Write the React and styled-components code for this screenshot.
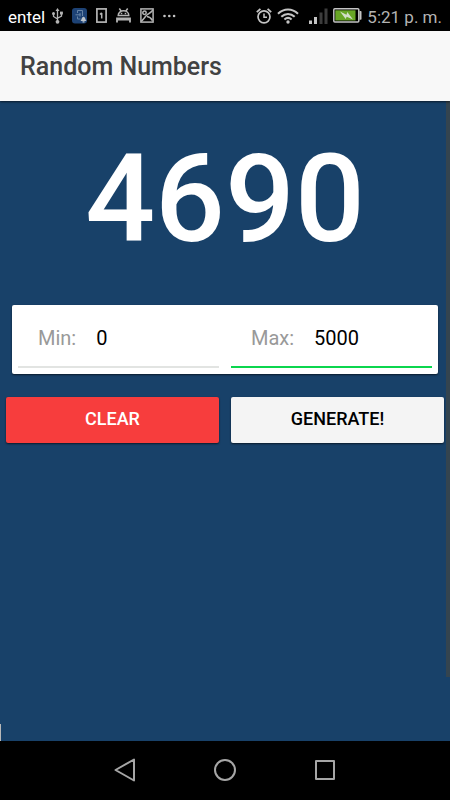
import React, { Component } from "react";
import styled, { createGlobalStyle } from "styled-components";

const GlobalStyle = createGlobalStyle`
  * {
    box-sizing: border-box;
  }

  body {
    margin: 0;
    background: #184169;
    font-family: Roboto, "Liberation Sans", sans-serif;
  }
`;

const Screen = styled.div`
  min-height: 100vh;
  display: flex;
  flex-direction: column;
  background: #184169;
`;

const StatusBar = styled.div`
  height: 31px;
  padding: 0 8px;
  display: flex;
  justify-content: space-between;
  align-items: center;
  background: #000;
  color: #c4c4c4;
`;

const StatusGroup = styled.div`
  display: flex;
  align-items: center;
  gap: ${props => props.$gap}px;

  svg {
    display: block;
    flex: none;
  }
`;

const StatusText = styled.span`
  padding-top: 2px;
  font-size: 17px;
  line-height: 24px;
  color: ${props => (props.$bright ? "#fff" : "#b4b4b4")};
`;

const Header = styled.header`
  height: 70px;
  padding: 2px 20px 0;
  display: flex;
  align-items: center;
  background: #f8f8f8;
  box-shadow: 0 1px 2px rgba(0, 0, 0, 0.6);
  z-index: 1;

  h1 {
    margin: 0;
    font-size: 25px;
    line-height: 32px;
    font-weight: 500;
    color: #424242;
  }
`;

const Content = styled.main`
  position: relative;
  flex: 1;
  padding: 26px 6px;
`;

const ScrollThumb = styled.div`
  position: absolute;
  top: 0;
  right: 0;
  width: 4px;
  height: 90%;
  background: #34444f;
`;

const Caret = styled.div`
  position: absolute;
  bottom: 0;
  left: 0;
  width: 1px;
  height: 17px;
  background: #b8b8b8;
`;

const Result = styled.output`
  display: block;
  font-size: 123px;
  line-height: 144px;
  font-weight: 500;
  text-align: center;
  color: #fff;
`;

const Card = styled.div`
  margin: 34px 6px 23px;
  padding: 6px 0;
  display: grid;
  grid-template-columns: repeat(2, minmax(0, 1fr));
  border-radius: 2px;
  background: #fff;
  box-shadow: 0 1px 2px rgba(0, 0, 0, 0.6);
`;

const Field = styled.label`
  height: 57px;
  margin: 0 6px;
  padding: 0 0 2px 20px;
  display: flex;
  align-items: center;
  gap: 20px;
  border-bottom: 2px solid ${props => (props.$active ? "#0bd64e" : "#e2e4e2")};
  font-size: 20px;
  line-height: 24px;
  color: #999;

  input {
    flex: 1;
    min-width: 0;
    padding: 0;
    border: none;
    outline: none;
    background: transparent;
    font: inherit;
    color: #000;
  }
`;

const Buttons = styled.div`
  display: grid;
  grid-template-columns: repeat(2, minmax(0, 1fr));
  gap: 12px;
`;

const Button = styled.button`
  height: 46px;
  padding: 0 12px 2px;
  border: none;
  border-radius: 2px;
  background: ${props => (props.$danger ? "#f73d3d" : "#f4f4f4")};
  color: ${props => (props.$danger ? "#fff" : "#000")};
  box-shadow: 0 1px 2px rgba(0, 0, 0, 0.6);
  font-family: inherit;
  font-size: 18px;
  line-height: 24px;
  font-weight: 500;
  text-transform: uppercase;
  cursor: pointer;
`;

const NavBar = styled.nav`
  height: 59px;
  padding-bottom: 2px;
  display: flex;
  justify-content: center;
  align-items: center;
  gap: 76px;
  background: #000;

  button {
    padding: 0;
    border: none;
    background: none;
    cursor: pointer;
  }

  svg {
    display: block;
  }
`;

const UsbIcon = () => (
  <svg width="11" height="16" viewBox="0 0 11 16" fill="none" stroke="#b4b4b4" strokeWidth="1.3">
    <path d="M5.5 2v11M1.5 6v2.500l4 2.500M9.500 5v3l-4 2.200" />
    <path d="M5.500 0l2 3h-4z" fill="#b4b4b4" stroke="none" />
    <circle cx="5.500" cy="13.800" r="1.900" fill="#b4b4b4" stroke="none" />
    <circle cx="1.500" cy="5.500" r="1.500" fill="#b4b4b4" stroke="none" />
    <path d="M8 3.600h2.900v2.900H8z" fill="#b4b4b4" stroke="none" />
  </svg>
);

const AppIcon = () => (
  <svg width="15" height="16" viewBox="0 0 15 16" fill="none">
    <rect width="15" height="15.500" rx="3" fill="#1d4275" />
    <path d="M5.500 5V2.500h5V8M5.500 8.500V11h3M3.500 6.800h5M8 5v3.500" stroke="#6784a6" />
    <path d="M8.500 13c1.200-.7.8-3.500 3-4.200 2.200.7 1.800 3.500 3 4.200zM10.500 13.300h2v1.200h-2z" fill="#bcc4cb" />
  </svg>
);

const SimIcon = () => (
  <svg width="11" height="15" viewBox="0 0 11 15" fill="none" stroke="#b4b4b4">
    <rect x="0.900" y="0.900" width="9.200" height="13.200" strokeWidth="1.700" />
    <path d="M5.700 10.500V5M4 6.500l1.700-1.700" strokeWidth="1.500" />
  </svg>
);

const AndroidIcon = () => (
  <svg width="15" height="15" viewBox="0 0 15 15" fill="none" stroke="#b4b4b4" strokeWidth="1.500">
    <path d="M2.200 7.600C2.200 4.600 4.700 2.800 7.500 2.800s5.300 1.800 5.300 4.800zM3.300 0.500l2 2.700M11.700 0.500l-2 2.700" />
    <path d="M4.800 5.600h1.500M8.700 5.600h1.500" />
    <path d="M1 14.500v-4h13v4M1 11.500h13" strokeWidth="1.800" />
  </svg>
);

const PictureIcon = () => (
  <svg width="14" height="15" viewBox="0 0 14 15" fill="none" stroke="#b4b4b4" strokeWidth="1.500">
    <rect x="0.900" y="0.900" width="12.200" height="13.200" />
    <circle cx="4.500" cy="4.800" r="1.700" />
    <path d="M1 13.500C4 11 5 8.500 7 7s4-2.500 6-5M7 8.500c2 .2 4 1.500 5.500 4" />
  </svg>
);

const DotsIcon = () => (
  <svg width="13" height="4" viewBox="0 0 13 4" fill="#c4c4c4">
    <circle cx="1.500" cy="2" r="1.300" />
    <circle cx="6.300" cy="2" r="1.300" />
    <circle cx="11.100" cy="2" r="1.300" />
  </svg>
);

const AlarmIcon = () => (
  <svg width="16" height="16" viewBox="0 0 16 16" fill="none" stroke="#c4c4c4">
    <circle cx="8" cy="8.800" r="6" strokeWidth="1.700" />
    <path d="M8 5.500v3.700h3" strokeWidth="1.500" />
    <path d="M0.800 4.200l3.600-3.400M15.200 4.200l-3.600-3.400" strokeWidth="1.800" />
  </svg>
);

const WifiIcon = () => (
  <svg width="22" height="16" viewBox="0 0 22 16" fill="none" stroke="#c4c4c4" strokeWidth="2">
    <path d="M1 5.800c5.800-5.800 14.200-5.800 20 0M4.300 8.800c4-3.900 9.400-3.900 13.400 0M7.400 11.500c2.200-2 5-2 7.200 0" />
    <circle cx="11" cy="14" r="1.700" fill="#c4c4c4" stroke="none" />
  </svg>
);

const SignalIcon = () => (
  <svg width="19" height="16" viewBox="0 0 19 16">
    <path d="M0 12.500h3V16H0zM5 9h3v7H5z" fill="#c4c4c4" />
    <path d="M10.500 4.500h3V16h-3zM15.500 0.500h3V16h-3z" fill="#3c3c3c" />
  </svg>
);

const BatteryIcon = () => (
  <svg width="29" height="15" viewBox="0 0 29 15">
    <rect x="0.800" y="0.800" width="25" height="13.200" rx="1" fill="none" stroke="#c4c4c4" strokeWidth="1.500" />
    <path d="M26.500 3h1.200q.8 0 .8.800v7.200q0 .8-.8.800h-1.200z" fill="#c4c4c4" />
    <path d="M2.300 2.300h20.200v10.200H2.300z" fill="#68a625" />
    <path d="M7 3.500l6.500 3.300.8-2.900 5.700 7.600-6.300-2.800-1 2.300z" fill="#d3dec8" />
  </svg>
);

class App extends Component {
  constructor(props) {
    super(props);
    this.handleClear = this.handleClear.bind(this);
    this.handleGenerate = this.handleGenerate.bind(this);
    this.state = {
      min: "0",
      max: "5000",
      result: 4690,
      activeField: "max"
    };
  }

  handleClear() {
    this.setState({ min: "", max: "", result: 0 });
  }

  handleGenerate() {
    const min = Number(this.state.min);
    const max = Number(this.state.max);
    const result = Math.floor(Math.random() * (max - min + 1)) + min;
    this.setState({ result });
  }

  render() {
    const { min, max, result, activeField } = this.state;
    return (
      <Screen>
        <GlobalStyle />
        <StatusBar>
          <StatusGroup $gap={9}>
            <StatusGroup $gap={7}>
              <StatusText $bright>entel</StatusText>
              <UsbIcon />
            </StatusGroup>
            <AppIcon />
            <SimIcon />
            <AndroidIcon />
            <PictureIcon />
            <DotsIcon />
          </StatusGroup>
          <StatusGroup $gap={5}>
            <AlarmIcon />
            <StatusGroup $gap={10}>
              <WifiIcon />
              <SignalIcon />
            </StatusGroup>
            <BatteryIcon />
            <StatusText>5:21 p. m.</StatusText>
          </StatusGroup>
        </StatusBar>
        <Header>
          <h1>Random Numbers</h1>
        </Header>
        <Content>
          <Result>{result}</Result>
          <Card>
            <Field $active={activeField === "min"}>
              Min:
              <input
                name="min"
                type="text"
                inputMode="numeric"
                value={min}
                onFocus={() => this.setState({ activeField: "min" })}
                onChange={event => this.setState({ min: event.target.value })}
              />
            </Field>
            <Field $active={activeField === "max"}>
              Max:
              <input
                name="max"
                type="text"
                inputMode="numeric"
                value={max}
                onFocus={() => this.setState({ activeField: "max" })}
                onChange={event => this.setState({ max: event.target.value })}
              />
            </Field>
          </Card>
          <Buttons>
            <Button type="button" $danger onClick={this.handleClear}>
              Clear
            </Button>
            <Button type="button" onClick={this.handleGenerate}>
              Generate!
            </Button>
          </Buttons>
          <ScrollThumb />
          <Caret />
        </Content>
        <NavBar>
          <button type="button" aria-label="Back">
            <svg width="24" height="24" viewBox="0 0 24 24" fill="none" stroke="#a6a6a6" strokeWidth="2" strokeLinejoin="round">
              <path d="M21 1.500v21L2.500 12z" />
            </svg>
          </button>
          <button type="button" aria-label="Home">
            <svg width="24" height="24" viewBox="0 0 24 24" fill="none" stroke="#a6a6a6" strokeWidth="2">
              <circle cx="12" cy="12" r="10" />
            </svg>
          </button>
          <button type="button" aria-label="Recent apps">
            <svg width="24" height="24" viewBox="0 0 24 24" fill="none" stroke="#a6a6a6" strokeWidth="2" strokeLinejoin="round">
              <rect x="3" y="3" width="18" height="18" />
            </svg>
          </button>
        </NavBar>
      </Screen>
    );
  }
}

export default App;
